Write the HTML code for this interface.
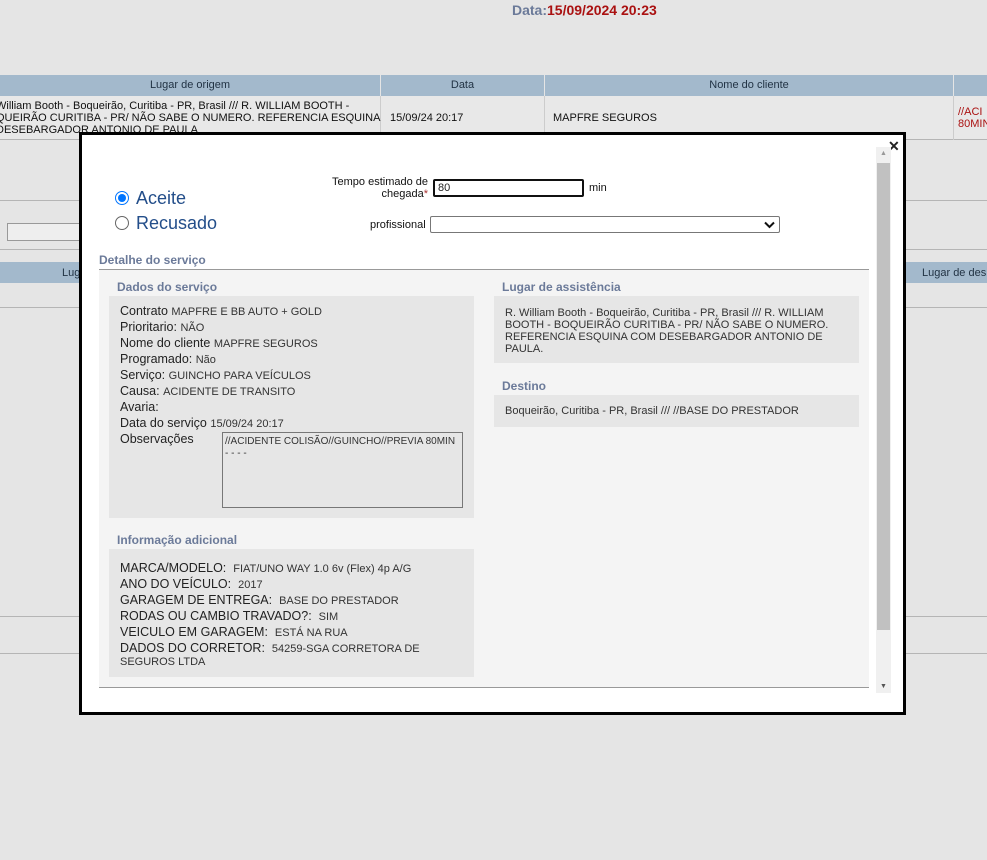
<!DOCTYPE html>
<html><head><meta charset="utf-8"><style>
*{box-sizing:border-box;margin:0;padding:0}
body{width:987px;height:860px;background:#e5e5e5;font-family:"Liberation Sans",Arial,sans-serif;position:relative;overflow:hidden;color:#222}
.a{position:absolute}
.hd{background:#a3b9cc;color:#234;font-size:11px;text-align:center;line-height:21px;height:21px;border-right:1px solid #e5e5e5}
.ln{position:absolute;left:0;width:987px;height:1px;background:#b5b5b5}
.t{color:#6b7a99;font-weight:bold;font-size:12px}
.box{background:#e6e6e6}
.r div{height:16px;line-height:16px;white-space:nowrap;font-size:12.5px;color:#222}
.r span{font-size:11px;color:#333}
.s{font-size:11px;color:#333;line-height:12px}
</style></head><body>
<div class="a" style="left:512px;top:2px;font-size:14px;font-weight:bold;color:#6b7a99">Data:<span style="color:#a11">15/09/2024 20:23</span></div>

<div class="a hd" style="left:0;top:75px;width:381px">Lugar de origem</div>
<div class="a hd" style="left:381px;top:75px;width:164px">Data</div>
<div class="a hd" style="left:545px;top:75px;width:409px">Nome do cliente</div>
<div class="a hd" style="left:954px;top:75px;width:40px"></div>
<div class="a" style="left:0;top:96px;width:987px;height:44px;background:#e8e8e8;border-bottom:1px solid #b5b5b5"></div>
<div class="a" style="left:380px;top:96px;width:1px;height:44px;background:#ccc"></div>
<div class="a" style="left:544px;top:96px;width:1px;height:44px;background:#ccc"></div>
<div class="a" style="left:953px;top:96px;width:1px;height:44px;background:#ccc"></div>
<div class="a" style="left:-4px;top:100px;font-size:11px;line-height:12px;width:390px;color:#111">William Booth - Boqueirão, Curitiba - PR, Brasil /// R. WILLIAM BOOTH -<br>QUEIRÃO CURITIBA - PR/ NÃO SABE O NUMERO. REFERENCIA ESQUINA<br>DESEBARGADOR ANTONIO DE PAULA</div>
<div class="a" style="left:390px;top:112px;font-size:11px;color:#111">15/09/24 20:17</div>
<div class="a" style="left:553px;top:112px;font-size:11px;color:#111">MAPFRE SEGUROS</div>
<div class="a" style="left:958px;top:106px;font-size:11px;line-height:12px;color:#a11">//ACI<br>80MIN</div>

<div class="ln" style="top:200px"></div>
<div class="ln" style="top:249px"></div>
<div class="a" style="left:7px;top:223px;width:80px;height:18px;border:1px solid #999;background:#eee"></div>
<div class="a hd" style="left:0;top:262px;width:987px;border:0"></div>
<div class="a" style="left:62px;top:267px;font-size:11px;color:#234">Lug</div>
<div class="a" style="left:922px;top:267px;font-size:11px;color:#234">Lugar de des</div>
<div class="ln" style="top:307px"></div>
<div class="ln" style="top:616px"></div>
<div class="ln" style="top:653px"></div>

<div class="a" style="left:79px;top:132px;width:827px;height:583px;border:3px solid #000;background:#fff"></div>
<div class="a" style="left:888px;top:138px;font-size:14px;font-weight:bold">✕</div>
<div class="a" style="left:876px;top:147px;width:15px;height:546px;background:#f0f0f0"></div>
<div class="a" style="left:877px;top:163px;width:13px;height:467px;background:#c1c1c1"></div>
<div class="a" style="left:880px;top:150px;font-size:7px;color:#999">▲</div>
<div class="a" style="left:880px;top:683px;font-size:7px;color:#555">▼</div>

<div class="a" style="left:115px;top:191px;width:14px;height:14px;border-radius:50%;border:1px solid #0075ff;background:#fff"><div style="margin:2px;width:8px;height:8px;border-radius:50%;background:#0075ff"></div></div>
<div class="a" style="left:136px;top:188px;font-size:18px;color:#234e8a">Aceite</div>
<div class="a" style="left:115px;top:216px;width:14px;height:14px;border-radius:50%;border:1px solid #666;background:#fff"></div>
<div class="a" style="left:136px;top:213px;font-size:18px;color:#234e8a">Recusado</div>

<div class="a" style="left:320px;top:176px;width:108px;text-align:right;font-size:11px;line-height:12px;color:#111">Tempo estimado de chegada<span style="color:#a33">*</span></div>
<div class="a" style="left:433px;top:179px;width:151px;height:18px;border:2px solid #111;border-radius:2px;font-size:11px;line-height:14px;padding-left:3px">80</div>
<div class="a" style="left:589px;top:182px;font-size:11px;color:#111">min</div>
<div class="a" style="left:370px;top:219px;font-size:11px;color:#111">profissional</div>
<div class="a" style="left:430px;top:216px;width:350px;height:17px;border:1px solid #777;border-radius:2px;background:#fff"></div>
<svg class="a" style="left:764px;top:221px" width="11" height="8"><path d="M1 1.5L5.5 6L10 1.5" stroke="#111" stroke-width="2" fill="none"/></svg>

<div class="a t" style="left:99px;top:253px">Detalhe do serviço</div>
<div class="a" style="left:99px;top:269px;width:770px;height:419px;background:#f4f4f4;border-top:1px solid #999;border-bottom:1px solid #999"></div>

<div class="a t" style="left:117px;top:280px">Dados do serviço</div>
<div class="a box" style="left:109px;top:296px;width:365px;height:222px"></div>
<div class="a r" style="left:120px;top:303px">
<div>Contrato <span>MAPFRE E BB AUTO + GOLD</span></div>
<div>Prioritario: <span>NÃO</span></div>
<div>Nome do cliente <span>MAPFRE SEGUROS</span></div>
<div>Programado: <span>Não</span></div>
<div>Serviço: <span>GUINCHO PARA VEÍCULOS</span></div>
<div>Causa: <span>ACIDENTE DE TRANSITO</span></div>
<div>Avaria:</div>
<div>Data do serviço <span>15/09/24 20:17</span></div>
<div>Observações</div></div>
<div class="a" style="left:222px;top:432px;width:241px;height:76px;border:1px solid #777;font-size:10px;line-height:12px;padding:3px 2px;color:#333">//ACIDENTE COLISÃO//GUINCHO//PREVIA 80MIN<br>- - - -</div>

<div class="a t" style="left:117px;top:533px">Informação adicional</div>
<div class="a box" style="left:109px;top:549px;width:365px;height:128px"></div>
<div class="a r" style="left:120px;top:560px">
<div>MARCA/MODELO:&nbsp; <span>FIAT/UNO WAY 1.0 6v (Flex) 4p A/G</span></div>
<div>ANO DO VEÍCULO:&nbsp; <span>2017</span></div>
<div>GARAGEM DE ENTREGA:&nbsp; <span>BASE DO PRESTADOR</span></div>
<div>RODAS OU CAMBIO TRAVADO?:&nbsp; <span>SIM</span></div>
<div>VEICULO EM GARAGEM:&nbsp; <span>ESTÁ NA RUA</span></div>
<div>DADOS DO CORRETOR:&nbsp; <span>54259-SGA CORRETORA DE</span></div></div>
<div class="a s" style="left:120px;top:656px">SEGUROS LTDA</div>

<div class="a t" style="left:502px;top:280px">Lugar de assistência</div>
<div class="a box" style="left:494px;top:296px;width:365px;height:67px"></div>
<div class="a s" style="left:505px;top:307px;width:345px">R. William Booth - Boqueirão, Curitiba - PR, Brasil /// R. WILLIAM BOOTH - BOQUEIRÃO CURITIBA - PR/ NÃO SABE O NUMERO. REFERENCIA ESQUINA COM DESEBARGADOR ANTONIO DE PAULA.</div>
<div class="a t" style="left:502px;top:379px">Destino</div>
<div class="a box" style="left:494px;top:395px;width:365px;height:32px"></div>
<div class="a s" style="left:505px;top:405px">Boqueirão, Curitiba - PR, Brasil /// //BASE DO PRESTADOR</div>
</body></html>
